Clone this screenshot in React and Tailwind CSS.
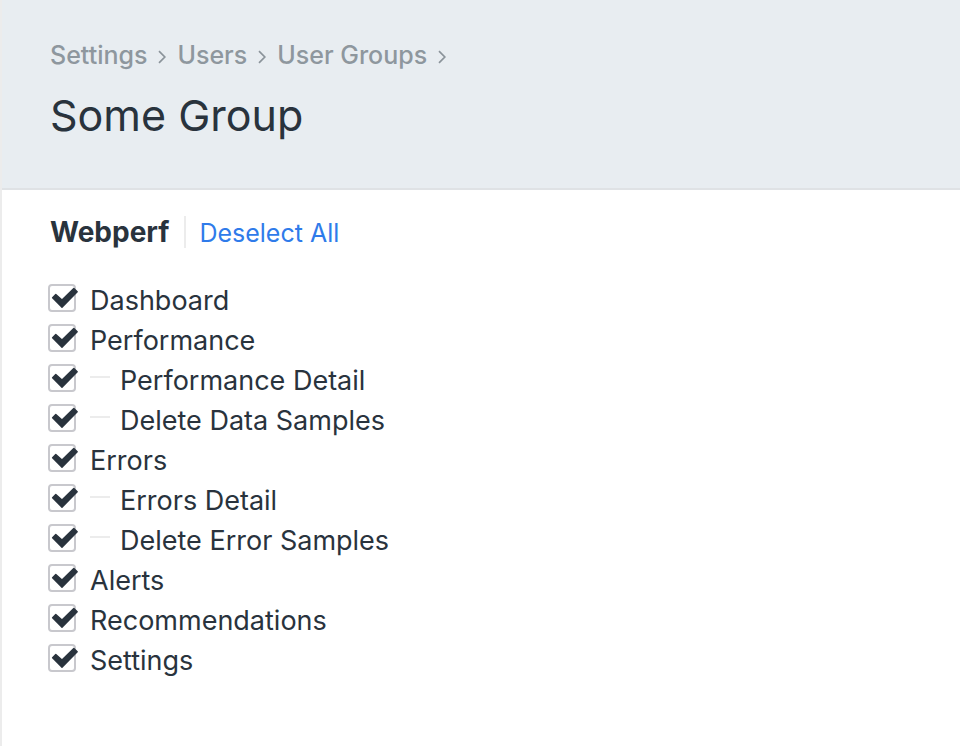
const crumbs = ["Settings", "Users", "User Groups"];

const permissions = [
  { label: "Dashboard" },
  { label: "Performance" },
  { label: "Performance Detail", child: true },
  { label: "Delete Data Samples", child: true },
  { label: "Errors" },
  { label: "Errors Detail", child: true },
  { label: "Delete Error Samples", child: true },
  { label: "Alerts" },
  { label: "Recommendations" },
  { label: "Settings" },
];

function Chevron() {
  return (
    <svg viewBox="0 0 10 14" className="mt-1 h-3.5 w-2.5" fill="none" stroke="#8b949b" strokeWidth="1.7" aria-hidden="true">
      <path d="M2 1.2 7.8 7 2 12.8" />
    </svg>
  );
}

function Permission({ label, child }) {
  const id = label.toLowerCase().replace(/ /g, "-");
  return (
    <li className="flex h-10 items-center">
      <span className="relative -ml-0.5 size-7 shrink-0">
        <input
          id={id}
          type="checkbox"
          defaultChecked
          className="peer block size-7 appearance-none rounded-[4px] border-2 border-[#c8c8cd] bg-white"
        />
        <svg
          viewBox="0 0 28 28"
          className="pointer-events-none absolute inset-0 hidden size-7 overflow-visible peer-checked:block"
          fill="#29333d"
          stroke="#29333d"
          strokeWidth="1.4"
          strokeLinejoin="round"
          aria-hidden="true"
        >
          <path d="M4.6 13.8 7.8 10.6 14 16 25.8 4.4 29.2 7.8 14 23.2Z" />
        </svg>
      </span>
      {child && <span className="ml-3.5 mb-0.5 h-0.5 w-5 bg-[#ececec]" />}
      <label htmlFor={id} className={child ? "ml-2.5 pt-1.5" : "ml-3.5 pt-1.5"}>
        {label}
      </label>
    </li>
  );
}

export default function App() {
  return (
    <div className="min-h-screen border-l-2 border-[#ececec] bg-white font-['Inter',sans-serif] text-[#29333d]">
      <header className="border-b-2 border-[#dfe2e5] bg-[#e8edf1] px-12 pt-[37px] pb-[43px]">
        <nav aria-label="Breadcrumb">
          <ol className="flex items-center text-[25px] leading-9 font-medium text-[#8e979e]">
            {crumbs.map((crumb) => (
              <li key={crumb} className="flex items-center gap-2.5 pr-2.5">
                <a href="#">{crumb}</a>
                <Chevron />
              </li>
            ))}
          </ol>
        </nav>
        <h1 className="mt-3 text-[43px] leading-[60px] font-normal">Some Group</h1>
      </header>
      <main className="px-12 pt-[25px] pb-12">
        <div className="flex items-center">
          <h2 className="border-r-2 border-[#ececec] pr-[15px] text-[28px] leading-8 font-bold">Webperf</h2>
          <button type="button" className="pt-0.5 pl-[13px] text-[25px] leading-8 text-[#2f7bea]">
            Deselect All
          </button>
        </div>
        <ul className="mt-[29px] text-[27px] leading-8">
          {permissions.map((p) => (
            <Permission key={p.label} {...p} />
          ))}
        </ul>
      </main>
    </div>
  );
}
